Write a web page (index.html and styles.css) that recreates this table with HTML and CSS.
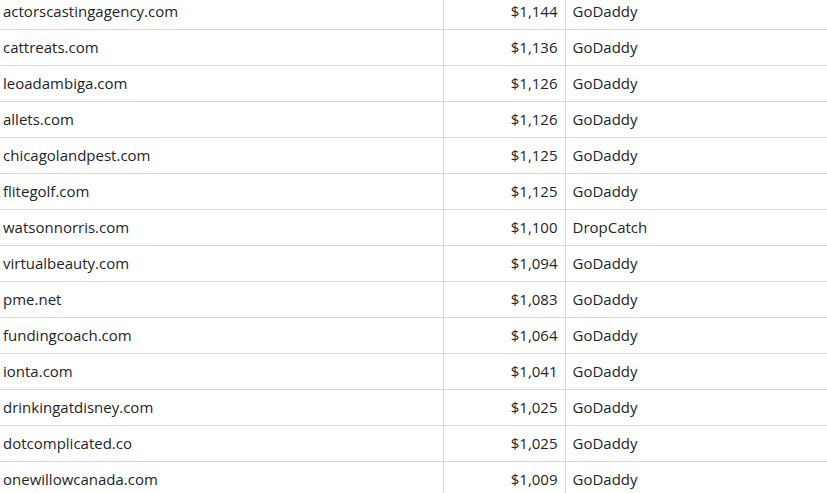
FILE: index.html
```html
<!DOCTYPE html>
<html>
<head>
    <title>Domain Sales</title>
    <meta name="viewport" content="width=device-width, initial-scale=1.0">
    <link rel="stylesheet" href="styles.css">
</head>
<body>
    <table class="sales-table">
        <colgroup>
            <col class="col-domain">
            <col class="col-price">
            <col class="col-venue">
        </colgroup>
        <tbody>
            <tr><td>actorscastingagency.com</td><td class="price">$1,144</td><td>GoDaddy</td></tr>
            <tr><td>cattreats.com</td><td class="price">$1,136</td><td>GoDaddy</td></tr>
            <tr><td>leoadambiga.com</td><td class="price">$1,126</td><td>GoDaddy</td></tr>
            <tr><td>allets.com</td><td class="price">$1,126</td><td>GoDaddy</td></tr>
            <tr><td>chicagolandpest.com</td><td class="price">$1,125</td><td>GoDaddy</td></tr>
            <tr><td>flitegolf.com</td><td class="price">$1,125</td><td>GoDaddy</td></tr>
            <tr><td>watsonnorris.com</td><td class="price">$1,100</td><td>DropCatch</td></tr>
            <tr><td>virtualbeauty.com</td><td class="price">$1,094</td><td>GoDaddy</td></tr>
            <tr><td>pme.net</td><td class="price">$1,083</td><td>GoDaddy</td></tr>
            <tr><td>fundingcoach.com</td><td class="price">$1,064</td><td>GoDaddy</td></tr>
            <tr><td>ionta.com</td><td class="price">$1,041</td><td>GoDaddy</td></tr>
            <tr><td>drinkingatdisney.com</td><td class="price">$1,025</td><td>GoDaddy</td></tr>
            <tr><td>dotcomplicated.co</td><td class="price">$1,025</td><td>GoDaddy</td></tr>
            <tr><td>onewillowcanada.com</td><td class="price">$1,009</td><td>GoDaddy</td></tr>
        </tbody>
    </table>
</body>
</html>
```

FILE: styles.css
```css
:root {
    --text: #212529;
    --border: #d5dbe1;
}

body {
    margin: 0;
    overflow: hidden;
    background: #fff;
    font-family: "Open Sans", sans-serif;
    font-size: 15px;
    color: var(--text);
}

.sales-table {
    width: 827px;
    margin-top: -7px;
    border-collapse: collapse;
    table-layout: fixed;
}

.col-domain {
    width: 443px;
}

.col-price {
    width: 122px;
}

.sales-table td {
    height: 33px;
    padding: 0 7px 2px;
    border-top: 1px solid var(--border);
    border-left: 1px solid var(--border);
    white-space: nowrap;
    vertical-align: middle;
}

.sales-table td:first-child {
    padding-left: 3px;
    border-left: none;
}

.sales-table td.price {
    text-align: right;
    padding-right: 7px;
}
```
